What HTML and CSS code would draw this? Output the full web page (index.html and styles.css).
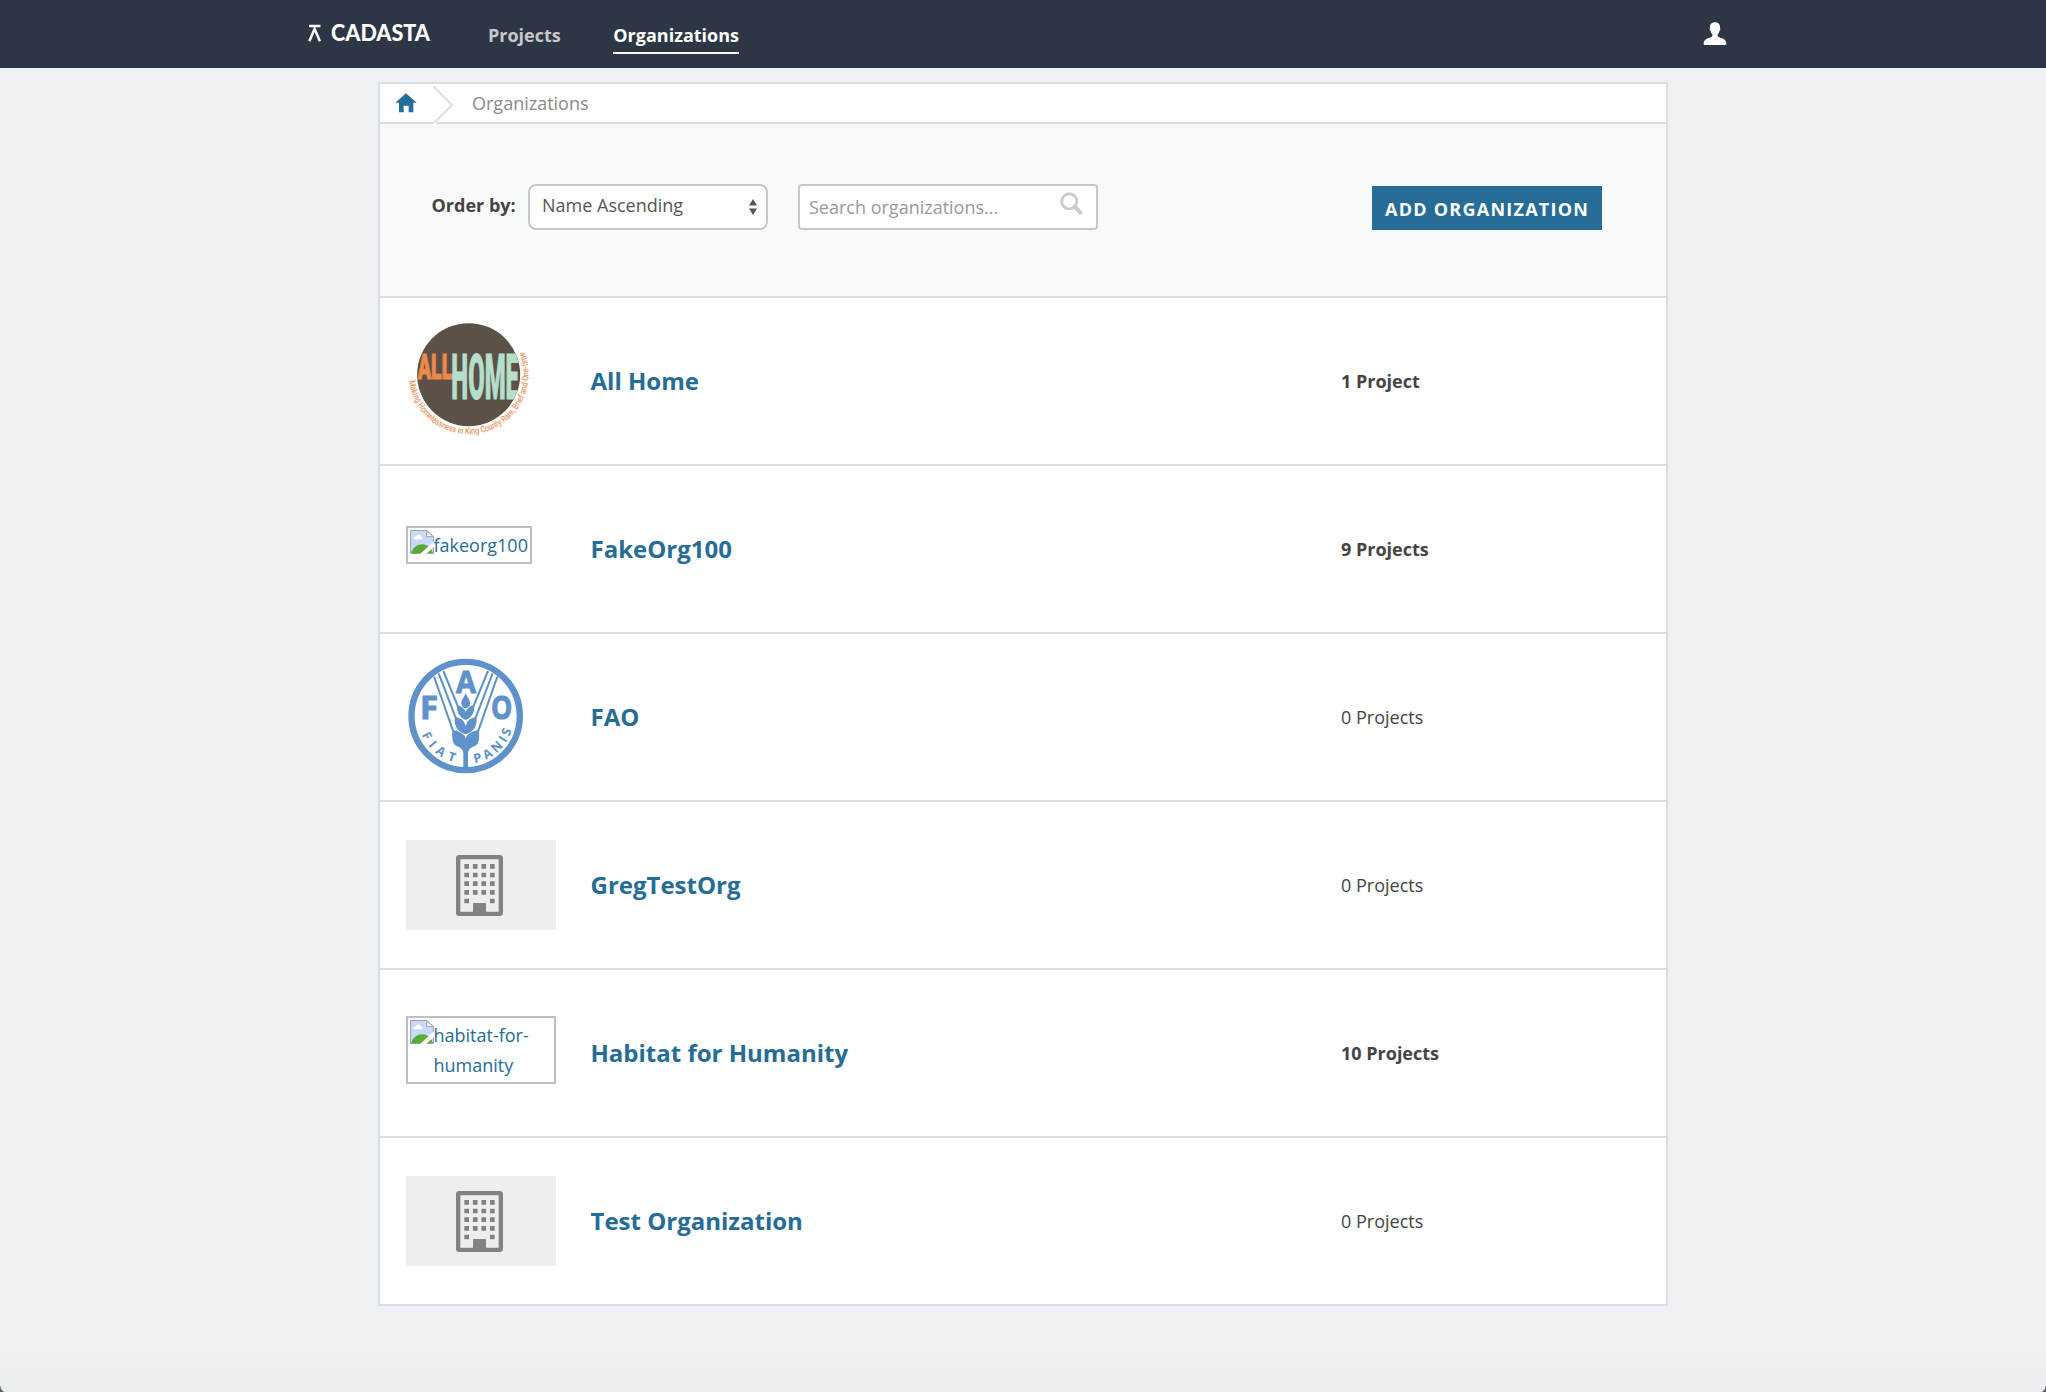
FILE: index.html
```html
<!DOCTYPE html>
<html lang="en">
<head>
<meta charset="utf-8">
<title>Organizations</title>
<link rel="stylesheet" href="styles.css">
</head>
<body>
<svg class="sprite" aria-hidden="true">
  <symbol id="broken" viewBox="0 0 72 72">
    <path d="M1.500 1.500H50L70.500 20V70.500H1.500Z" fill="#c8dafa" stroke="#a0a3a8" stroke-width="3"/>
    <path d="M3 70C12 38 46 36 62 54L69 69Z" fill="#59ab35"/>
    <path d="M10 28c-1-7 5-9 8-8 2-9 14-9 15 0 5 1 5 7 1 8z" fill="#fff"/>
    <path d="M50 2V20H70Z" fill="#f4f4f4" stroke="#a0a3a8" stroke-width="3"/>
    <path d="M29 73L72 34V50L48 73Z" fill="#fff"/>
  </symbol>
  <symbol id="building" viewBox="0 0 450 270">
    <rect x="156.500" y="51.500" width="128" height="170" rx="3" fill="none" stroke="#828282" stroke-width="13"/>
    <path d="M201 224V192q0-3 3-3h33q3 0 3 3v32z" fill="#828282"/>
    <g fill="none" stroke="#828282" stroke-width="14" stroke-dasharray="14 11.700">
      <path d="M175 79H268M175 105H268M175 131H268M175 157H268"/>
      <path d="M175 183H189M252 183H266"/>
    </g>
  </symbol>
</svg>
<header class="topbar">
  <a class="logo">
    <svg width="130" height="30" viewBox="0 0 130 30">
      <path d="M2 4H13.500M2.300 19.300L7.600 7L12.900 19.300" fill="none" stroke="#fff" stroke-width="2.500"/>
      <text x="24" y="19.400" textLength="99" lengthAdjust="spacingAndGlyphs">CADASTA</text>
    </svg>
  </a>
  <nav class="nav">
    <a class="nav-link">Projects</a>
    <a class="nav-link active">Organizations</a>
  </nav>
  <svg class="user" width="24" height="24" viewBox="0 0 72 72"><path d="M36 1c11 0 16 7 15 17 2 3 1 8-2 9-1 5-3 8-5 10v6c2 5 25 5 26 20 0 4 0 6-2 6H4c-2 0-2-2-2-6 1-15 24-15 26-20v-6c-2-2-4-5-5-10-3-1-4-6-2-9C20 8 25 1 36 1z" fill="#fff"/></svg>
</header>
<main class="panel">
  <div class="breadcrumb">
    <svg class="home" width="22" height="20" viewBox="0 0 66 60"><path d="M33 1L65 29H55V58H41V38H26V58H12V29H1Z" fill="#256c97"/></svg>
    <svg class="chevron" width="22" height="42" viewBox="0 0 22 42"><path d="M2 2L21 21L2 40Z" fill="#fff"/><path d="M0.500 2.500L19 21L1 39" fill="none" stroke="#dcdfe3" stroke-width="2"/><path d="M0 42L3 39" stroke="#fff" stroke-width="2"/></svg>
    <span>Organizations</span>
  </div>
  <div class="filters">
    <span class="label">Order by:</span>
    <div class="select"><span>Name Ascending</span><svg width="8" height="16" viewBox="0 0 8 16"><path d="M0 6.500L4 0L8 6.500ZM0 9.500L4 16L8 9.500Z" fill="#555"/></svg></div>
    <div class="search"><span>Search organizations...</span><svg width="23" height="23" viewBox="0 0 23 23" fill="none" stroke="#ccc"><circle cx="9.300" cy="9.300" r="7.600" stroke-width="2.900"/><path d="M14.500 14.500L20.500 20.500" stroke-width="4" stroke-linecap="round"/></svg></div>
    <a class="button">ADD ORGANIZATION</a>
  </div>
  <div class="row">
    <div class="thumb">
      <svg width="130" height="126" viewBox="0 0 390 378">
        <defs>
          <clipPath id="disc"><circle cx="188" cy="170" r="154"/></clipPath>
          <path id="motto" d="M9.500 188A179.500 179.500 0 1 0 352 96"/>
        </defs>
        <circle cx="188" cy="170" r="154.500" fill="#5b5147"/>
        <g clip-path="url(#disc)" class="allhome">
          <text x="35" y="183" font-size="105" textLength="104" lengthAdjust="spacingAndGlyphs" fill="#ec894c" stroke="#ec894c">ALL</text>
          <text x="136" y="242" font-size="187" textLength="203" lengthAdjust="spacingAndGlyphs" fill="#b5dfca" stroke="#b5dfca">HOME</text>
        </g>
        <text class="motto"><textPath href="#motto" textLength="614" lengthAdjust="spacingAndGlyphs">Making Homelessness in King County Rare, Brief and One-time</textPath></text>
      </svg>
    </div>
    <a class="title">All Home</a><span class="count strong">1 Project</span>
  </div>
  <div class="row">
    <div class="thumb"><div class="missing short"><svg width="24" height="24"><use href="#broken"/></svg><span>fakeorg100</span></div></div>
    <a class="title">FakeOrg100</a><span class="count strong">9 Projects</span>
  </div>
  <div class="row">
    <div class="thumb">
      <svg class="fao" width="120" height="120" viewBox="0 0 360 360">
        <defs>
          <path id="fiat" d="M47 236A143 143 0 0 0 162 322"/>
          <path id="panis" d="M206 321A143 143 0 0 0 322 203"/>
        </defs>
        <circle cx="179" cy="180" r="162.500" fill="none" stroke="#5f91cb" stroke-width="19"/>
        <g fill="#5f91cb">
          <g stroke="#5f91cb" stroke-width="3">
            <text x="150" y="112" font-size="93" textLength="60" lengthAdjust="spacingAndGlyphs">A</text>
            <text x="42" y="188" font-size="95" textLength="54" lengthAdjust="spacingAndGlyphs">F</text>
            <text x="255" y="188" font-size="95" textLength="64" lengthAdjust="spacingAndGlyphs">O</text>
          </g>
          <text font-size="38"><textPath href="#fiat" textLength="132">FIAT</textPath></text>
          <text font-size="38"><textPath href="#panis" textLength="156">PANIS</textPath></text>
          <path d="M179 112C184 126 193 130 192 143C191 152 184 157 179 157C174 157 167 152 166 143C165 130 174 126 179 112Z"/>
          <path d="M153 148Q173 151 179 168Q185 151 205 148Q208 180 179 192Q150 180 153 148Z"/>
          <path d="M147 182Q173 187 179 209Q185 187 211 182Q217 222 179 235Q141 222 147 182Z"/>
          <path d="M140 222Q175 228 179 248Q183 228 218 222Q224 262 206 270Q187 276 186 292V336H172V292Q171 276 152 270Q134 262 140 222Z"/>
        </g>
        <g fill="none" stroke="#5f91cb" stroke-width="6">
          <path d="M84 62L142 227M98 52L150 188M112 45L156 152"/>
          <path d="M274 62L216 227M260 52L208 188M246 45L202 152"/>
        </g>
      </svg>
    </div>
    <a class="title">FAO</a><span class="count">0 Projects</span>
  </div>
  <div class="row">
    <div class="thumb"><svg class="placeholder"><use href="#building"/></svg></div>
    <a class="title">GregTestOrg</a><span class="count">0 Projects</span>
  </div>
  <div class="row">
    <div class="thumb"><div class="missing"><svg width="24" height="24"><use href="#broken"/></svg><span>habitat-for-humanity</span></div></div>
    <a class="title">Habitat for Humanity</a><span class="count strong">10 Projects</span>
  </div>
  <div class="row">
    <div class="thumb"><svg class="placeholder"><use href="#building"/></svg></div>
    <a class="title">Test Organization</a><span class="count">0 Projects</span>
  </div>
</main>
<i class="corner left"></i><i class="corner right"></i>
</body>
</html>
```
FILE: styles.css
```css
* { box-sizing: border-box; }
body {
  position: relative;
  margin: 0;
  height: 1392px;
  overflow: hidden;
  background: linear-gradient(#edf1f4 1350px, #e9edf0 1392px);
  color: #444;
  font: 18px/30px "Open Sans", sans-serif;
}
svg { display: block; flex: none; }
.sprite { position: absolute; width: 0; height: 0; }
.topbar {
  display: flex;
  align-items: flex-start;
  height: 68px;
  padding: 18px 319.5px 0 307px;
  background: #2d3645;
}
.logo { width: 181px; padding-top: 4px; }
.logo text { fill: #fff; font: 900 22.5px Lato, sans-serif; }
.nav { display: flex; gap: 52.5px; flex: 1; }
.nav-link {
  color: #c8c8c8;
  font-weight: 700;
  line-height: 34px;
  border-bottom: 2px solid transparent;
}
.nav-link.active { color: #fff; border-color: #fff; }
.user { margin-top: 4px; }
.panel {
  width: 1290px;
  margin: 14px 0 0 378px;
  border: 2px solid #dadee2;
  border-bottom: 0;
  background: #fff;
}
.breadcrumb {
  display: flex;
  height: 40px;
  padding-left: 15px;
  border-bottom: 2px solid #dadee2;
  color: #8a8a8a;
  line-height: 38px;
}
.home { margin-top: 9px; }
.chevron { position: relative; margin: 0 17px 0 16px; }
.filters {
  display: flex;
  height: 174px;
  padding: 60px 64px 0 51.5px;
  background: #f8faf9;
  border-bottom: 2px solid #dadee2;
}
.label { width: 96.5px; font-weight: 700; line-height: 42px; }
.select, .search {
  display: flex;
  justify-content: space-between;
  height: 46px;
  border: 2px solid #c8c8c8;
  background: #fff;
}
.select {
  width: 240px;
  margin-right: 30px;
  padding: 0 9px 0 12px;
  border-radius: 8px;
  color: #555;
  line-height: 38px;
}
.select svg { margin-top: 13px; }
.search {
  width: 300px;
  padding: 0 13px 0 9px;
  border-radius: 4px;
  color: #999;
  line-height: 42px;
}
.search svg { margin-top: 6px; }
.button {
  width: 230px;
  height: 44px;
  margin: 2px 0 0 auto;
  padding-left: 13px;
  background: #256c97;
  color: #fff;
  font-weight: 700;
  line-height: 46px;
  letter-spacing: 1.25px;
  white-space: nowrap;
}
.row {
  display: flex;
  align-items: center;
  height: 168px;
  padding-left: 26px;
  border-bottom: 2px solid #dadee2;
}
.thumb { width: 184.5px; flex: none; }
.title { width: 750.5px; color: #256c97; font-size: 24px; font-weight: 700; }
.strong { font-weight: 700; }
.placeholder { width: 150px; height: 90px; background: #eee; }
.missing {
  display: flex;
  width: 150px;
  margin-bottom: 6px;
  padding: 2px;
  border: 2px solid #bfbfbf;
  color: #256c97;
}
.missing span { margin-left: -0.5px; }
.missing.short { width: 126px; margin-bottom: 8px; }
.allhome text { font-family: Roboto, sans-serif; font-weight: 900; stroke-width: 3px; }
.motto { fill: #ee9562; font: 500 27px Roboto, sans-serif; }
.fao { margin-bottom: 2px; }
.fao text { font-family: "Open Sans", sans-serif; font-weight: 700; }
.corner {
  position: absolute;
  bottom: 0;
  width: 7px;
  height: 6px;
}
.corner.left { left: 0; background: radial-gradient(circle at 100% 0, transparent 6px, #66615e 7px); }
.corner.right { right: 0; background: radial-gradient(circle at 0 0, transparent 6px, #665f60 7px); }
```
